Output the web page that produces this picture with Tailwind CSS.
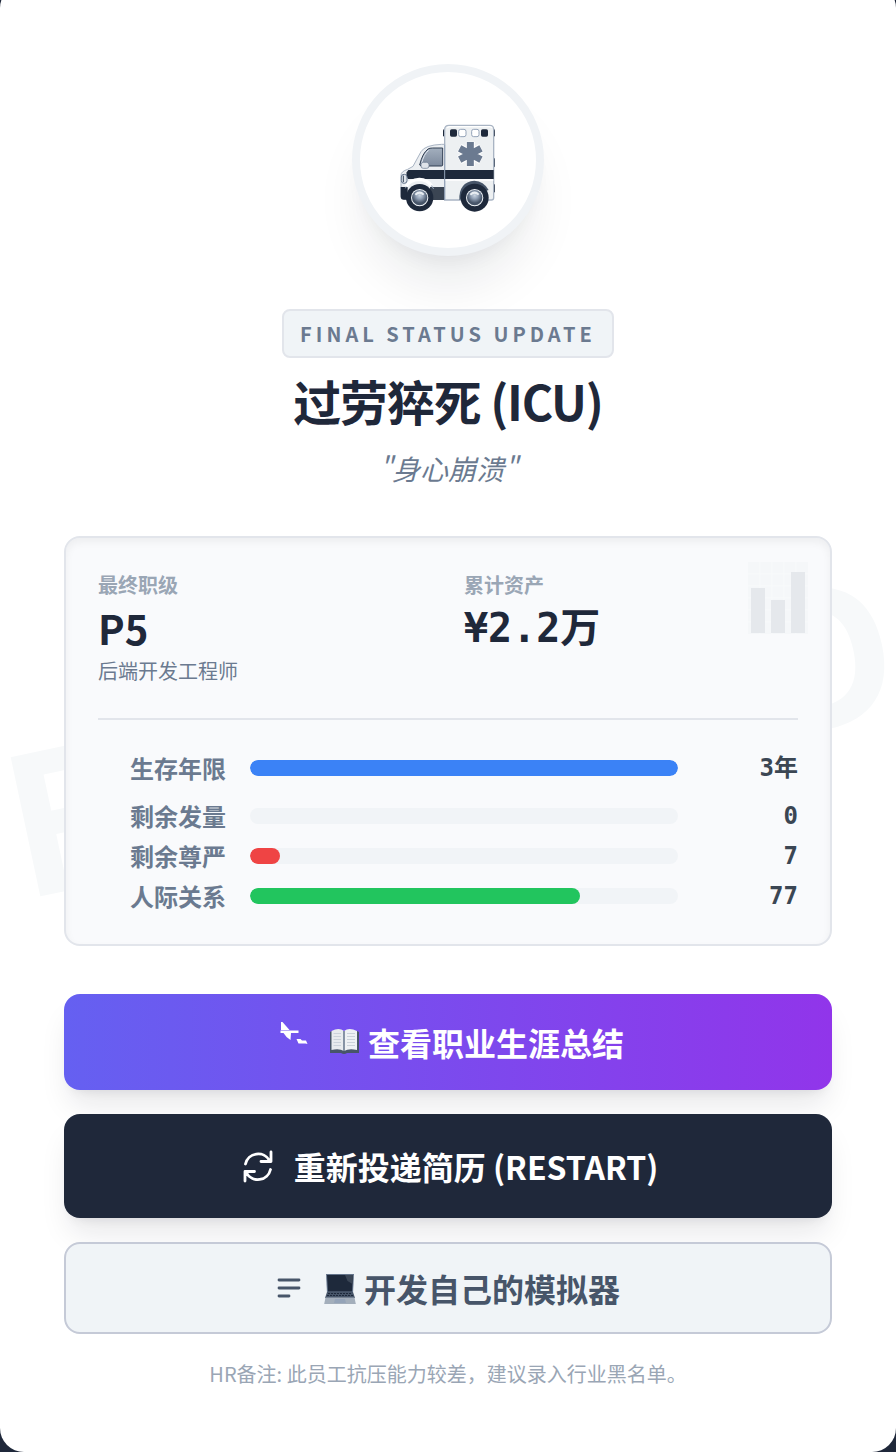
<!DOCTYPE html>
<html lang="zh-CN">
<head>
<meta charset="utf-8">
<meta name="viewport" content="width=device-width, initial-scale=1">
<title>过劳猝死 (ICU)</title>
<script src="https://cdn.jsdelivr.net/npm/@tailwindcss/browser@4"></script>
</head>
<body class="bg-[#1f283a] font-['Noto_Sans_CJK_SC',sans-serif] text-[#1f283a] overflow-x-hidden">
<main class="relative -mt-4 overflow-hidden rounded-3xl bg-white px-16 pt-20 pb-[63px]">
  <div aria-hidden="true" class="pointer-events-none absolute inset-0 flex items-center justify-center pt-3">
    <span class="-rotate-12 text-[192px] leading-none font-bold whitespace-nowrap text-[#f7f9fa]">FINISHED</span>
  </div>

  <div class="relative flex flex-col items-center">
    <div class="size-48 rounded-full border-8 border-[#f0f3f6] bg-white shadow-[0_40px_50px_-10px_rgba(15,23,42,0.08),0_16px_20px_-12px_rgba(15,23,42,0.06)]">
      <svg viewBox="60 66 528 528" class="size-full" role="img" aria-label="救护车">
        <defs>
          <linearGradient id="glass" x1="0" y1="0" x2="0" y2="1"><stop offset="0" stop-color="#a3afbe"/><stop offset="1" stop-color="#7d8a9d"/></linearGradient>
          <radialGradient id="hub" cx=".5" cy=".35"><stop offset="0" stop-color="#cbd5e1"/><stop offset=".45" stop-color="#94a3b8"/><stop offset="1" stop-color="#475569"/></radialGradient>
        </defs>
        <rect x="309" y="238" width="10" height="22" rx="4" fill="#1e293b"/>
        <rect x="455" y="238" width="10" height="22" rx="4" fill="#1e293b"/>
        <rect x="455" y="324" width="10" height="28" rx="4" fill="#334155"/>
        <rect x="455" y="402" width="10" height="26" rx="4" fill="#1e293b"/>
        <path d="M183 400v-24q0-12 20-18l16-9 24-44q12-20 62-22h12v165H196q-13 0-13-14z" fill="#eceff2" stroke="#a9b4c3" stroke-width="3"/>
        <path d="M314 450V238q0-12 13-12h122q12 0 12 12v205q0 7-7 7z" fill="#edf0f2" stroke="#a9b4c3" stroke-width="4"/>
        <path d="M322 234q2-4 8-4h118q6 0 8 4" fill="none" stroke="#fff" stroke-width="4"/>
        <rect x="330" y="238" width="21" height="22" rx="5" fill="#1e293b"/>
        <rect x="356" y="238" width="22" height="22" rx="6" fill="#fff" stroke="#94a3b8" stroke-width="3"/>
        <rect x="395" y="238" width="22" height="22" rx="6" fill="#fff" stroke="#94a3b8" stroke-width="3"/>
        <rect x="423" y="238" width="21" height="22" rx="5" fill="#1e293b"/>
        <path d="M391 312V275M391 312V349M391 312L358 294M391 312L424 330M391 312L424 294M391 312L358 330" stroke="#fff" stroke-width="27"/>
        <path d="M391 312V276M391 312V348M391 312L359 295M391 312L423 329M391 312L423 295M391 312L359 329" stroke="#6b7a90" stroke-width="21"/>
        <path d="M239 345q8-35 25-48 5-3 14-3h30v51q0 3-4 3h-61z" fill="url(#glass)" stroke="#334155" stroke-width="3"/>
        <path d="M244 342q8-31 22-41" fill="none" stroke="#e2e8f0" stroke-width="3"/>
        <path d="M205 360H461v27H204q-7-8-4-20z" fill="#1e293b"/>
        <path d="M316 390H460" stroke="#fff" stroke-width="4"/>
        <path d="M182 411h21v38h-12q-9 0-9-9z" fill="#1e293b"/>
        <path d="M270 411h44v39h-44z" fill="#3b4553"/>
        <path d="M196 415q10-25 42-26 30 1 43 28" fill="none" stroke="#94a3b8" stroke-width="3"/>
        <path d="M198 409q12-20 40-21 24 1 36 19" fill="none" stroke="#fff" stroke-width="10"/>
        <path d="M358 450q-2-54 45-58 28 1 43 28" fill="#475569"/>
        <rect x="184" y="373" width="17" height="27" rx="8" fill="#dfe4ea" stroke="#64748b" stroke-width="3"/>
        <path d="M190 377v19" stroke="#334155" stroke-width="3"/>
        <rect x="243" y="337" width="24" height="18" rx="7" fill="#dfe4ea" stroke="#64748b" stroke-width="2"/>
        <path d="M314 284V450" stroke="#94a3b8" stroke-width="3"/>
        <circle cx="239" cy="443" r="41" fill="#1e293b"/><circle cx="239" cy="443" r="26" fill="#f1f5f9"/><circle cx="239" cy="443" r="23" fill="url(#hub)"/><path d="M226 434q13-12 25 0" stroke="#e8edf2" stroke-width="6" fill="none"/>
        <circle cx="404" cy="443" r="42" fill="#1e293b"/><circle cx="404" cy="443" r="26" fill="#f1f5f9"/><circle cx="404" cy="443" r="23" fill="url(#hub)"/><path d="M391 434q13-12 25 0" stroke="#e8edf2" stroke-width="6" fill="none"/>
      </svg>
    </div>
    <p class="mt-[53px] rounded-lg border-2 border-[#e2e5eb] bg-[#f0f4f7] px-4 py-2 text-xl leading-[29px] font-bold tracking-[4px] text-[#6b7a90]">FINAL STATUS UPDATE</p>
    <h1 class="mt-3 text-5xl leading-[60px] font-bold tracking-tight">过劳猝死 (ICU)</h1>
    <p class="mt-[18px] text-[28px] leading-10 text-[#6b7a90] italic">"身心崩溃"</p>
  </div>

  <section class="relative mt-12 rounded-2xl border-2 border-[#e2e5eb] bg-[#f9fafc] p-8 shadow-[inset_0_4px_8px_rgba(0,0,0,0.05)]">
    <svg viewBox="0 0 60 72" class="absolute top-6 right-[22px] h-[72px] w-[60px]" aria-hidden="true">
      <path d="M0 0h60v72H0z" fill="#f5f7f9"/>
      <path d="M0 12h60M0 24h60M0 36h60M0 48h60M0 60h60M12 0v72M24 0v72M36 0v72M48 0v72" stroke="#f8fafb" stroke-width="1"/>
      <path d="M3 26h14v45H3zM23 38h14v33H23zM43 10h14v61H43z" fill="#e5e8ec"/>
    </svg>
    <div class="grid grid-cols-2 gap-8">
      <div>
        <p class="text-xl leading-[30px] font-bold text-[#9aa6b5]">最终职级</p>
        <p class="text-[40px] leading-[56px] font-bold">P5</p>
        <p class="text-xl leading-[30px] text-[#6b7a90]">后端开发工程师</p>
      </div>
      <div>
        <p class="text-xl leading-[30px] font-bold text-[#9aa6b5]">累计资产</p>
        <p class="font-['DejaVu_Sans_Mono','Noto_Sans_CJK_SC',monospace] text-[40px] leading-[56px] font-bold">¥2.2万</p>
      </div>
    </div>
    <dl class="mt-8 flex flex-col gap-2 border-t-2 border-[#e2e5eb] pt-8 text-2xl leading-8 font-bold">
      <div class="mb-2 flex items-center gap-6">
        <dt class="w-32 text-right text-[#6b7a90]">生存年限</dt>
        <dd class="h-4 flex-1 overflow-hidden rounded-full bg-[#f1f4f7]"><div class="h-full rounded-full bg-[#3b82f6]" style="width:100%"></div></dd>
        <dd class="w-24 text-right font-['DejaVu_Sans_Mono','Noto_Sans_CJK_SC',monospace] text-[#3b4653]">3年</dd>
      </div>
      <div class="flex items-center gap-6">
        <dt class="w-32 text-right text-[#6b7a90]">剩余发量</dt>
        <dd class="h-4 flex-1 overflow-hidden rounded-full bg-[#f1f4f7]"><div class="h-full rounded-full bg-[#ef4444]" style="width:0%"></div></dd>
        <dd class="w-24 text-right font-['DejaVu_Sans_Mono','Noto_Sans_CJK_SC',monospace] text-[#3b4653]">0</dd>
      </div>
      <div class="flex items-center gap-6">
        <dt class="w-32 text-right text-[#6b7a90]">剩余尊严</dt>
        <dd class="h-4 flex-1 overflow-hidden rounded-full bg-[#f1f4f7]"><div class="h-full rounded-full bg-[#ef4444]" style="width:7%"></div></dd>
        <dd class="w-24 text-right font-['DejaVu_Sans_Mono','Noto_Sans_CJK_SC',monospace] text-[#3b4653]">7</dd>
      </div>
      <div class="flex items-center gap-6">
        <dt class="w-32 text-right text-[#6b7a90]">人际关系</dt>
        <dd class="h-4 flex-1 overflow-hidden rounded-full bg-[#f1f4f7]"><div class="h-full rounded-full bg-[#22c55e]" style="width:77%"></div></dd>
        <dd class="w-24 text-right font-['DejaVu_Sans_Mono','Noto_Sans_CJK_SC',monospace] text-[#3b4653]">77</dd>
      </div>
    </dl>
  </section>

  <div class="relative mt-12 flex flex-col gap-6 text-[32px] leading-10 font-bold">
    <button type="button" class="flex h-24 items-center justify-center gap-4 rounded-2xl bg-linear-to-r/srgb from-[#6560f1] to-[#9135ea] text-white shadow-[0_20px_30px_-6px_rgba(15,23,42,0.1),0_8px_12px_-8px_rgba(15,23,42,0.1)]">
      <svg viewBox="0 0 40 40" class="size-10" fill="currentColor" aria-hidden="true">
        <path d="M9 0h1.500l7 8H9zM8.500 8.500h18v2.500h-18zM11.500 11h7.500l-.500 7q-4-2-7-7zM24.500 17h4l1.500 1.500h4l1.500 3.500-2-.500h-7z"/>
      </svg>
      <span class="flex items-center gap-2">
        <svg viewBox="0 0 32 32" class="size-8" aria-hidden="true">
          <path d="M2 6l2-1h25l2 1v21H19q-3 2-6 0H2z" fill="#475569"/>
          <path d="M3.500 5Q11 1 16 5v20q-5-3-12.500-1z" fill="#e8ebee"/>
          <path d="M29 5Q21 1 16 5v20q5-3 13-1z" fill="#eef1f4"/>
          <path d="M16 5v20" stroke="#64748b" stroke-width="1.500"/>
          <path d="M5.500 7.500h7.500M5.500 10.500h7.500M5.500 13.500h7.500M5.500 16.500h7.500M5.500 19.500h7.500M19 7.500h8M19 10.500h8M19 13.500h8M19 16.500h8M19 19.500h8" stroke="#cbd2da"/>
        </svg>
        查看职业生涯总结
      </span>
    </button>
    <button type="button" class="flex h-[104px] items-center justify-center gap-4 rounded-2xl bg-[#1f283a] text-white shadow-[0_20px_30px_-6px_rgba(15,23,42,0.1),0_8px_12px_-8px_rgba(15,23,42,0.1)]">
      <svg viewBox="0 0 40 40" class="size-10" fill="none" stroke="currentColor" stroke-width="2.800" stroke-linecap="round" stroke-linejoin="round" aria-hidden="true">
        <path d="M7.500 18A13 13 0 0 1 31.500 14.500M33 6v9.500h-10M32.500 23.500A13 13 0 0 1 8.500 27M7 35v-9.500h9.500"/>
      </svg>
      <span>重新投递简历 (RESTART)</span>
    </button>
    <button type="button" class="flex h-[92px] items-center justify-center gap-4 rounded-2xl border-2 border-[#c5cad7] bg-[#f0f4f7] text-[#475569]">
      <svg viewBox="0 0 32 32" class="size-8" fill="none" stroke="currentColor" stroke-width="2.800" stroke-linecap="round" aria-hidden="true">
        <path d="M3 8h20M3 16h20M3 24h10"/>
      </svg>
      <span class="flex items-center gap-2">
        <svg viewBox="0 0 32 32" class="size-8" aria-hidden="true">
          <path d="M2 2h28l-1 19H3z" fill="#64748b"/>
          <path d="M3 3h26l-1 16.500H4z" fill="#1e293b"/>
          <path d="M21 3h8l-.5 9-5-3z" fill="#3b4656"/>
          <path d="M3 20h26l2 6H1z" fill="#475569"/>
          <path d="M4 21.500h24M3 23.500h26" stroke="#1e293b" stroke-dasharray="2 1"/>
          <path d="M1.500 25.500h29L32 33H0z" fill="#a3aebb"/>
          <path d="M11 27h10l1 4H10z" fill="#94a3b8"/>
        </svg>
        开发自己的模拟器
      </span>
    </button>
  </div>
  <p class="relative mt-[25px] text-center text-xl leading-[30px] text-[#9aa6b5]">HR备注: 此员工抗压能力较差，建议录入行业黑名单。</p>
</main>
</body>
</html>
